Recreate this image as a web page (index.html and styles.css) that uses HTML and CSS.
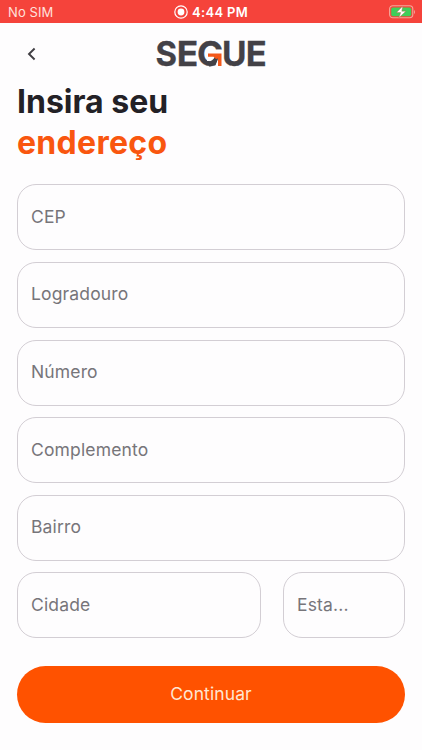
FILE: index.html
```html
<!DOCTYPE html>
<html lang="pt-BR">
<head>
    <meta charset="UTF-8">
    <meta name="viewport" content="width=device-width, initial-scale=1.0">
    <title>Segue - Endereço</title>
    <link rel="stylesheet" href="styles.css">
</head>
<body>
    <div class="status-bar">
        <span class="carrier">No SIM</span>
        <div class="clock">
            <svg class="record-icon" viewBox="0 0 14 14">
                <circle cx="7" cy="7" r="6.2" fill="none" stroke="#fff" stroke-width="1.2"/>
                <circle cx="7" cy="7" r="3.4" fill="#fff"/>
            </svg>
            <span>4:44 PM</span>
        </div>
        <svg class="battery-icon" viewBox="0 0 28 14">
            <rect x="1.6" y="0.8" width="23.2" height="12" rx="3.2" fill="none" stroke="#f5a79a" stroke-width="1.1"/>
            <rect x="3.2" y="2.4" width="20" height="8.8" rx="1.8" fill="#3fce5a"/>
            <path d="M26 5v4c1.300-.5 1.300-3.500 0-4z" fill="#f5a79a"/>
            <path d="M14.800 1L8.500 7.600h4.200L10.900 12.800l7-6.600h-4.100z" fill="#fff" stroke="#b0603c" stroke-width="0.4"/>
        </svg>
    </div>

    <header class="header">
        <button class="back-btn" aria-label="Voltar">
            <svg viewBox="0 0 10 14">
                <path d="M7.600 1.500L2 7l5.600 5.500" fill="none" stroke="#403e43" stroke-width="1.9"/>
            </svg>
        </button>
        <svg class="logo" viewBox="0 0 116 48">
            <g class="logo-text">
                <text x="2.500" y="36" textLength="21.500" lengthAdjust="spacingAndGlyphs">S</text>
                <text x="23.800" y="36" textLength="21.500" lengthAdjust="spacingAndGlyphs">E</text>
                <text x="44" y="36" textLength="26.500" lengthAdjust="spacingAndGlyphs">G</text>
                <text x="69" y="36" textLength="24.500" lengthAdjust="spacingAndGlyphs">U</text>
                <text x="92.800" y="36" textLength="21" lengthAdjust="spacingAndGlyphs">E</text>
            </g>
            <!-- the bar of the G is an arrow -->
            <path d="M54 20.500H70V37H62L64 31H54z" fill="#fefdfe"/>
            <path d="M55 31.500C58 31.500 60.500 30 62 26.500H65.500C65 32 61.500 36 56 36.600z" fill="#434147"/>
            <path d="M55 23.500H68.500V36H65V28.500L63 29 60.500 26.700H55z" fill="#f4581a"/>
        </svg>
    </header>

    <main class="content">
        <h1 class="title">Insira seu<br><span class="highlight">endereço</span></h1>

        <form class="address-form">
            <input class="field" type="text" placeholder="CEP">
            <input class="field" type="text" placeholder="Logradouro">
            <input class="field" type="text" placeholder="Número">
            <input class="field" type="text" placeholder="Complemento">
            <input class="field" type="text" placeholder="Bairro">
            <div class="field-row">
                <input class="field" type="text" placeholder="Cidade">
                <input class="field" type="text" placeholder="Esta...">
            </div>
            <button class="submit-btn" type="button">Continuar</button>
        </form>
    </main>
</body>
</html>
```
FILE: styles.css
```css
* {
    box-sizing: border-box;
}

body {
    margin: 0;
    height: 750px;
    overflow: hidden;
    background-color: #fefdfe;
    font-family: Inter, "Liberation Sans", sans-serif;
    color: #232126;
}

.status-bar {
    display: grid;
    grid-template-columns: 1fr auto 1fr;
    align-items: center;
    height: 23px;
    padding: 0 6px 0 8px;
    background-color: #f5433b;
    color: #fff;
    font-size: 13px;
}

.carrier {
    color: #ffe0dc;
    letter-spacing: 0.1px;
}

.clock {
    display: flex;
    align-items: center;
    gap: 4px;
    padding-right: 2px;
    font-weight: 600;
    letter-spacing: 0.3px;
}

.record-icon {
    width: 14px;
    height: 14px;
}

.battery-icon {
    justify-self: end;
    width: 28px;
    height: 14px;
}

.header {
    display: grid;
    grid-template-columns: 1fr auto 1fr;
    align-items: center;
    height: 59px;
    padding: 3px 17px 0;
}

.back-btn {
    justify-self: start;
    display: flex;
    padding: 0 10px;
    border: none;
    background: none;
}

.back-btn svg {
    width: 10px;
    height: 14px;
}

.logo {
    width: 116px;
    height: 48px;
}

.logo-text {
    font-size: 34px;
    font-weight: 700;
    fill: #434147;
    stroke: #434147;
    stroke-width: 0.3px;
}

.content {
    padding: 0 17px;
}

.title {
    margin: 0 0 21.400px;
    font-size: 32px;
    line-height: 40.500px;
    font-weight: 700;
}

.highlight {
    letter-spacing: 0.3px;
    color: #f9560f;
}

.address-form {
    display: flex;
    flex-direction: column;
    gap: 11.600px;
}

.field {
    width: 100%;
    min-width: 0;
    height: 66px;
    padding: 0 13px 2px;
    border: 1.500px solid #d3ced4;
    border-radius: 19px;
    background-color: transparent;
    font-family: inherit;
    font-size: 17.500px;
    letter-spacing: 0.15px;
}

.field::placeholder {
    color: #77757a;
    opacity: 1;
}

.field-row {
    display: grid;
    grid-template-columns: 2fr 1fr;
    gap: 22px;
}

.submit-btn {
    height: 57px;
    margin-top: 16px;
    padding-bottom: 2px;
    border: none;
    border-radius: 29px;
    background-color: #ff5200;
    color: #ffe6d2;
    font-family: inherit;
    font-size: 17.500px;
    letter-spacing: 0.1px;
}
```
